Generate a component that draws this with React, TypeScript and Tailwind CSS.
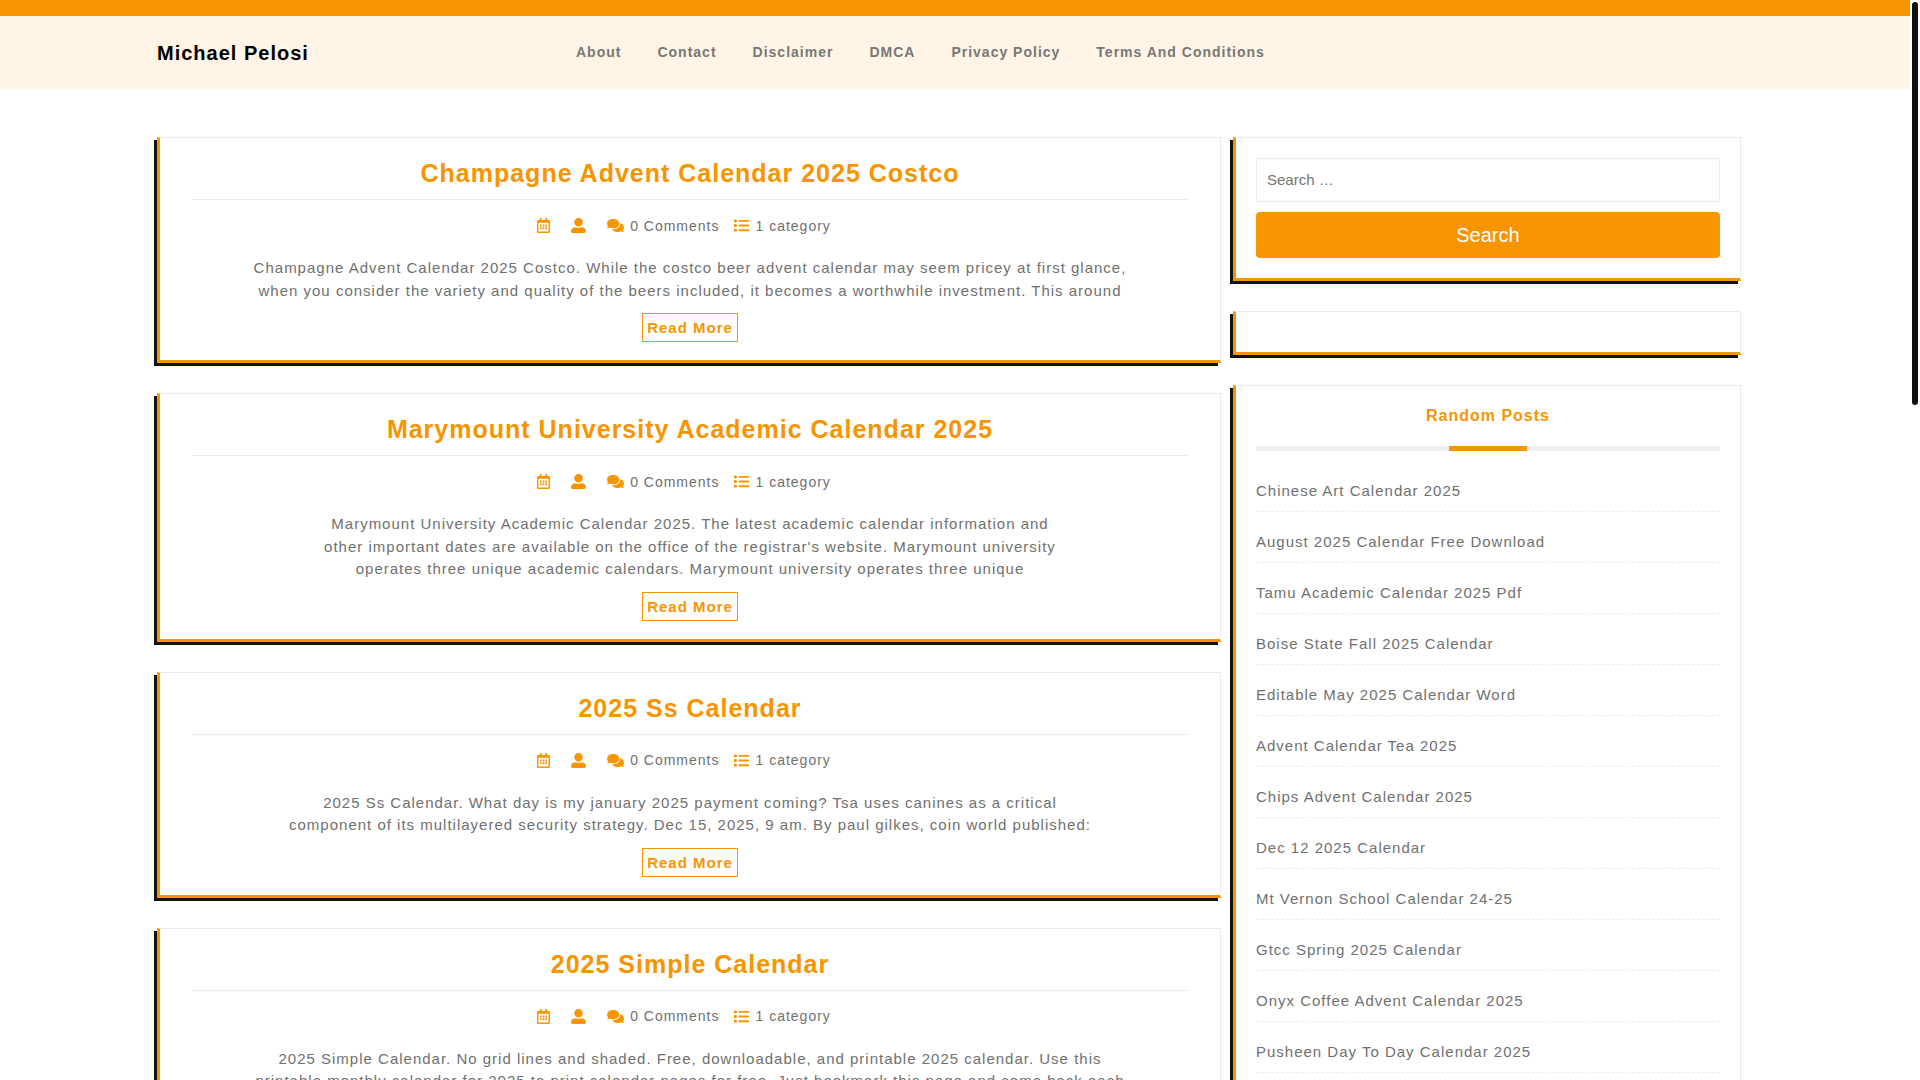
import { FaComments, FaList, FaRegCalendarAlt, FaUserAlt } from 'react-icons/fa';
import clsx from 'clsx';
import type { ReactNode } from 'react';

const navLinks = ['About', 'Contact', 'Disclaimer', 'DMCA', 'Privacy Policy', 'Terms And Conditions'];

const posts = [
  {
    title: 'Champagne Advent Calendar 2025 Costco',
    excerpt:
      'Champagne Advent Calendar 2025 Costco. While the costco beer advent calendar may seem pricey at first glance, when you consider the variety and quality of the beers included, it becomes a worthwhile investment. This around',
  },
  {
    title: 'Marymount University Academic Calendar 2025',
    excerpt:
      "Marymount University Academic Calendar 2025. The latest academic calendar information and other important dates are available on the office of the registrar's website. Marymount university operates three unique academic calendars. Marymount university operates three unique",
  },
  {
    title: '2025 Ss Calendar',
    excerpt:
      '2025 Ss Calendar. What day is my january 2025 payment coming? Tsa uses canines as a critical component of its multilayered security strategy. Dec 15, 2025, 9 am. By paul gilkes, coin world published:',
  },
  {
    title: '2025 Simple Calendar',
    excerpt:
      '2025 Simple Calendar. No grid lines and shaded. Free, downloadable, and printable 2025 calendar. Use this printable monthly calendar for 2025 to print calendar pages for free. Just bookmark this page and come back each',
  },
];

const randomPosts = [
  'Chinese Art Calendar 2025',
  'August 2025 Calendar Free Download',
  'Tamu Academic Calendar 2025 Pdf',
  'Boise State Fall 2025 Calendar',
  'Editable May 2025 Calendar Word',
  'Advent Calendar Tea 2025',
  'Chips Advent Calendar 2025',
  'Dec 12 2025 Calendar',
  'Mt Vernon School Calendar 24-25',
  'Gtcc Spring 2025 Calendar',
  'Onyx Coffee Advent Calendar 2025',
  'Pusheen Day To Day Calendar 2025',
];

const App = () => {
  return (
    <div className="h-screen overflow-hidden bg-white pr-2.5 font-['Liberation_Sans',Arial,sans-serif] text-[15px] leading-normal tracking-[1px] text-[#707070]">
      <Header />
      <div className="mx-auto mt-12 flex max-w-[1596px] items-start">
        <main className="flex w-2/3 flex-col gap-[30px]">
          {posts.map((post) => (
            <PostCard key={post.title} {...post} />
          ))}
        </main>
        <Sidebar />
      </div>
      <div className="fixed top-0.5 right-0.5 h-[403px] w-1.5 rounded-full bg-[#121212]" />
    </div>
  );
};

export default App;

const Header = () => {
  return (
    <header className="border-t-16 border-[#f79400] bg-[#fff4e5]">
      <div className="mx-auto flex h-[73px] max-w-[1596px] items-center">
        <div className="w-1/4">
          <a href="#" className="text-xl font-bold text-black">
            Michael Pelosi
          </a>
        </div>
        <nav className="flex gap-9 pb-0.5 pl-5 text-sm font-bold text-[#777777]">
          {navLinks.map((link) => (
            <a key={link} href="#">
              {link}
            </a>
          ))}
        </nav>
      </div>
    </header>
  );
};

const Card = ({ className, children }: { className?: string; children?: ReactNode }) => {
  return (
    <div
      className={clsx(
        'border border-b-3 border-l-3 border-[#ebebeb] border-b-[#f79400] border-l-[#f79400] shadow-[-3px_3px_0_0_#121212]',
        className
      )}
    >
      {children}
    </div>
  );
};

const PostCard = ({ title, excerpt }: { title: string; excerpt: string }) => {
  return (
    <Card className="px-8 pt-5 pb-[18px] text-center">
      <h2 className="border-b border-[#ebebeb] pb-2.5 text-[25px] leading-[31px] font-bold text-[#f79400]">
        <a href="#">{title}</a>
      </h2>
      <div className="mt-[15px] flex h-[21px] items-center justify-center gap-[15px] pr-3 text-sm">
        <MetaItem icon={<FaRegCalendarAlt className="h-[15px] w-[13px]" />} />
        <MetaItem icon={<FaUserAlt className="size-[15px]" />} />
        <MetaItem icon={<FaComments className="h-[15px] w-[17px]" />}>0 Comments</MetaItem>
        <MetaItem icon={<FaList className="size-[15px]" />}>1 category</MetaItem>
      </div>
      <p className="mt-[21px] mb-[11px] text-balance">{excerpt}</p>
      <a
        href="#"
        className="mx-auto block h-[29px] w-fit border border-[#f79400] px-1 leading-[27px] font-bold text-[#f79400]"
      >
        Read More
      </a>
    </Card>
  );
};

const MetaItem = ({ icon, children }: { icon: ReactNode; children?: ReactNode }) => {
  return (
    <span className="flex items-center gap-1.5">
      <span className="text-[#f79400]">{icon}</span>
      <span>{children}</span>
    </span>
  );
};

const Sidebar = () => {
  return (
    <aside className="flex w-1/3 flex-col gap-[30px] px-3">
      <Card className="p-5">
        <form className="flex flex-col gap-2.5" onSubmit={(e) => e.preventDefault()}>
          <input
            type="search"
            aria-label="Search"
            placeholder="Search …"
            className="h-11 w-full border border-[#ebebeb] px-2.5 pb-0.5 tracking-normal placeholder:text-[#757575]"
          />
          <button type="submit" className="h-[46px] rounded bg-[#f79400] text-xl tracking-normal text-white">
            Search
          </button>
        </form>
      </Card>
      <Card className="p-5" />
      <Card className="p-5 pt-[18px]">
        <h3 className="text-center text-base leading-6 font-bold text-[#f79400]">Random Posts</h3>
        <div className="mt-[18px] mb-2.5 h-[5px] bg-[#f0f0f0]">
          <div className="mx-auto h-full w-1/6 bg-[#f79400]" />
        </div>
        <ul>
          {randomPosts.map((post) => (
            <li key={post} className="border-b border-dashed border-[#ebebeb] pt-[19px] pb-[9px] leading-[22px]">
              <a href="#">{post}</a>
            </li>
          ))}
        </ul>
      </Card>
    </aside>
  );
};
